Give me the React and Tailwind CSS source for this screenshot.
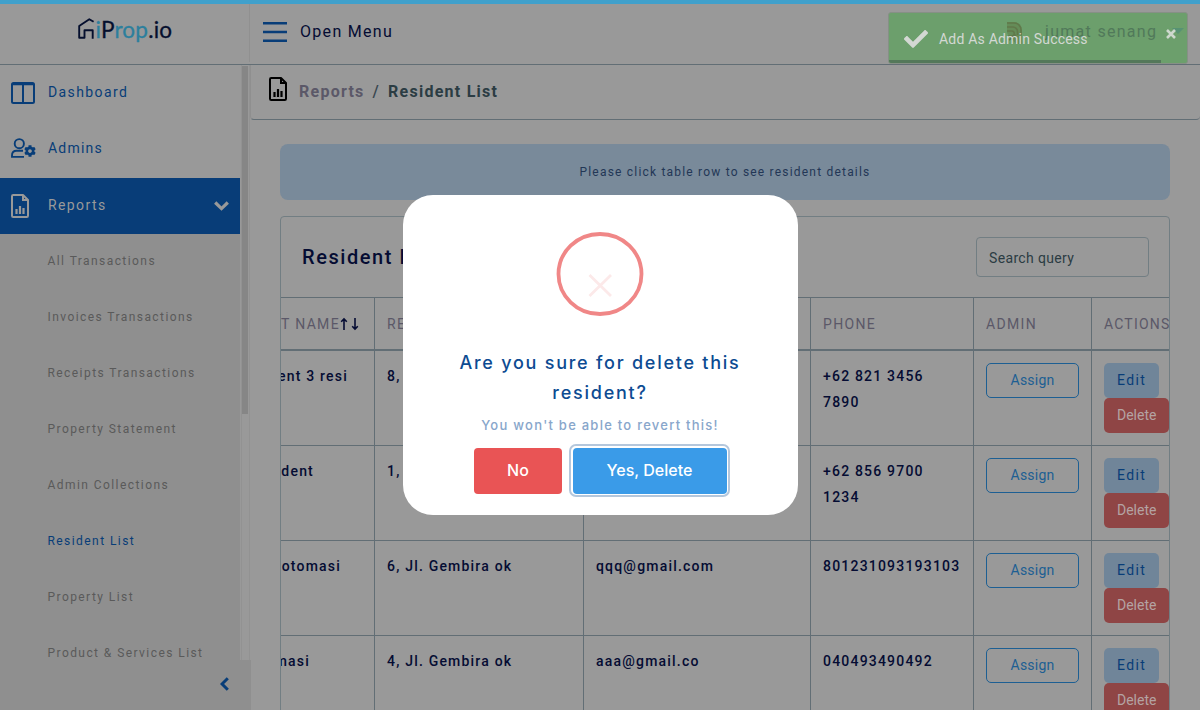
import React from "react";
import { FaCog, FaCheck } from "react-icons/fa";

const subItems = [
  "All Transactions",
  "Invoices Transactions",
  "Receipts Transactions",
  "Property Statement",
  "Admin Collections",
  "Resident List",
  "Property List",
  "Product & Services List",
];

const rows = [
  { name: "ent 3 resi", address: "8,", email: "", phone: "+62 821 3456 7890", nameEnd: 67 },
  { name: "dent", address: "1,", email: "", phone: "+62 856 9700 1234", nameEnd: 33 },
  { name: "otomasi", address: "6, Jl. Gembira ok", email: "qqq@gmail.com", phone: "801231093193103", nameEnd: 60 },
  { name: "masi", address: "4, Jl. Gembira ok", email: "aaa@gmail.co", phone: "040493490492", nameEnd: 29 },
];

function ReportIcon({ className }) {
  return (
    <svg viewBox="0 0 18 24" className={className} fill="none" stroke="currentColor" strokeWidth="2">
      <path d="M1 2.2Q1 1 2.2 1H12l5 5v15.800Q17 23 15.800 23H2.200Q1 23 1 21.800Z" strokeLinejoin="round" />
      <path d="M12 1.500V6H16.500" strokeWidth="2" />
      <path d="M5.500 20v-5M9 20v-8M12.500 20v-6" strokeWidth="2.200" />
    </svg>
  );
}

function Logo() {
  return (
    <svg viewBox="0 0 96 30" className="h-[30px] w-[96px]">
      <path
        d="M16.600 6.800L12.300 4.200 2.200 11V22.800H7.500V15.200H15.700V23.700"
        fill="none"
        stroke="#050f2e"
        strokeWidth="1.900"
        strokeLinejoin="round"
      />
      <text x="18.500" y="23" fontFamily="Lato, sans-serif" fontSize="22.500" fill="#2c7f9d" stroke="#2c7f9d" strokeWidth="0.300" textLength="76.500">
        <tspan>i</tspan>
        <tspan fill="#050f2e" stroke="#050f2e">P</tspan>
        <tspan>rop</tspan>
        <tspan fill="#050f2e" stroke="#050f2e">.io</tspan>
      </text>
    </svg>
  );
}

function Sidebar() {
  return (
    <aside className="flex h-[646px] w-[250px] shrink-0 flex-col">
      <div className="flex h-[595px] overflow-hidden">
        <nav className="w-[240px] text-[14px] tracking-[1.400px] text-[#083d78]">
          <div className="flex h-[56px] items-center pl-[11px]">
            <svg viewBox="0 0 24 22" className="h-[22px] w-[24px]" fill="none" stroke="currentColor" strokeWidth="2">
              <rect x="1" y="1" width="22" height="20" rx="1.500" />
              <path d="M1 2.200H23M12 2v19" />
            </svg>
            <span className="ml-[13px] pb-[2px]">Dashboard</span>
          </div>
          <div className="flex h-[57px] items-center pb-[3px] pl-[11px]">
            <div className="relative h-[20px] w-[25px]">
              <svg viewBox="0 0 25 20" className="h-[20px] w-[25px]" fill="none" stroke="currentColor" strokeWidth="1.900">
                <circle cx="8.300" cy="5.700" r="4.600" />
                <path d="M13 18.900H1V17.500Q1 12.800 5.500 12.800H12" />
              </svg>
              <FaCog className="absolute left-[13px] top-[7px] size-[12px]" />
            </div>
            <span className="ml-[12px] tracking-[1.200px]">Admins</span>
          </div>
          <div className="flex h-[56px] items-center bg-[#083d78] pl-[11px] pr-[11px] text-[#999]">
            <ReportIcon className="h-[24px] w-[18px]" />
            <span className="ml-[19px] flex-1 pb-[2px]">Reports</span>
            <svg viewBox="0 0 15 10" className="h-[10px] w-[15px]" fill="none" stroke="currentColor" strokeWidth="3.200">
              <path d="M1.200 1.500L7.500 7.600L13.800 1.500" />
            </svg>
          </div>
          <ul className="bg-[#8f8f8f] text-[12px] tracking-[1.430px] text-[#5a5a5a]">
            {subItems.map((s) => (
              <li
                key={s}
                className={
                  s === "Resident List"
                    ? "flex h-[56px] items-center pb-[2px] pl-[47.500px] text-[#083d78]"
                    : "flex h-[56px] items-center pb-[2px] pl-[47.500px]"
                }
              >
                {s}
              </li>
            ))}
          </ul>
        </nav>
        <div className="flex w-[10px] border-r border-[#929292] bg-[#999] pl-[1px]">
          <div className="flex-1 border-l border-[#929292] pt-px">
            <div className="h-[348px] w-[6px] bg-[#868686]" />
          </div>
        </div>
      </div>
      <div className="flex h-[51px] w-[251px] items-center justify-end bg-[#8f8f8f] pb-[3px] pr-[22px]">
        <svg viewBox="0 0 9 14" className="h-[14px] w-[9px]" fill="none" stroke="#083d78" strokeWidth="3">
          <path d="M7.800 1.200L2 7l5.800 5.800" />
        </svg>
      </div>
    </aside>
  );
}

function ResidentTable() {
  const head = "flex items-center border-r border-[#626e75] pl-[12px] pt-[2px]";
  const cell = "border-r border-[#626e75] px-[12px] pt-[12px]";
  const cols = "grid w-[888px] grid-cols-[94px_209px_227px_163px_118px_77px]";
  return (
    <div className="w-[888px] overflow-hidden text-[14px]">
      <div className={cols + " h-[54px] border-b-2 border-t border-[#626e75] tracking-[1.350px] text-[#5b5868]"}>
        <div className="flex items-center justify-end border-r border-[#626e75] pr-[14px]">
          <span className="whitespace-nowrap pt-[2px]">T NAME</span>
          <svg viewBox="0 0 20 14" className="h-[14px] w-[20px] shrink-0" fill="none" stroke="#050c33" strokeWidth="1.600">
            <path d="M4 13V2M1.200 4.800L4 2L6.800 4.800M15 1V12M12.200 9.200L15 12L17.800 9.200" />
          </svg>
        </div>
        <div className={head}>RE</div>
        <div className={head}></div>
        <div className={head}>PHONE</div>
        <div className={head}>ADMIN</div>
        <div className="flex items-center pl-[12px] pt-[2px] tracking-[1.200px]">ACTIONS</div>
      </div>
      {rows.map((r) => (
        <div
          key={r.name}
          className={cols + " h-[95px] border-b border-[#626e75] font-medium leading-[26px] tracking-[1.2px] text-[#050c33]"}
        >
          <div className="overflow-hidden border-r border-[#626e75] pt-[12px]">
            <div className="flex justify-end whitespace-nowrap" style={{ width: r.nameEnd }}>
              {r.name}
            </div>
          </div>
          <div className={cell}>{r.address}</div>
          <div className={cell}>{r.email}</div>
          <div className={cell}>{r.phone}</div>
          <div className={cell}>
            <div className="flex h-[35px] items-center justify-center rounded-[5px] border border-[#1d5f93] pb-[1px] font-normal tracking-[0.2px] text-[#1d5f93]">
              Assign
            </div>
          </div>
          <div className="pl-[12px] pt-[12px]">
            <div className="flex h-[35px] w-[55px] items-center rounded-[5px] bg-[#708599] pb-[1px] pl-[13px] font-normal tracking-[1.4px] text-[#083d78]">
              Edit
            </div>
            <div className="flex h-[35px] w-[65px] items-center rounded-[5px] bg-[#8f4545] pb-[1px] pl-[13px] font-normal tracking-normal text-[#b4a3a3]">
              Delete
            </div>
          </div>
        </div>
      ))}
    </div>
  );
}

function Toast() {
  return (
    <div className="absolute left-[888px] top-[12px] h-[52px] w-[300px] overflow-hidden rounded-[3px] border border-[#869086] bg-[#6c9f6c]">
      <svg viewBox="0 0 17 24" className="absolute left-[117px] top-[8px] h-[24px] w-[17px]" fill="none">
        <path d="M1 1H8A8 8 0 0 1 16 9V23H10L1 12Z" fill="#658c58" />
        <path
          d="M1 2H8A7 7 0 0 1 15 9V14M1 6H7A4.500 4.500 0 0 1 11.500 10.500V14M1 10H5.500A2.500 2.500 0 0 1 6 15H2M3 19L10 14"
          stroke="#60784a"
          strokeWidth="1.600"
        />
      </svg>
      <div className="absolute left-[156px] top-[7px] whitespace-nowrap text-[16px] leading-[24px] tracking-[1.300px] text-[#51795a]">jumat senang</div>
      <svg viewBox="0 0 12 6" className="absolute left-[283px] top-[15px] h-[6px] w-[12px]">
        <path d="M0 0H12L6 6Z" fill="#579273" />
      </svg>
      <div className="flex h-full items-center pl-[15px] pt-[2px] text-[#d3d8d3]">
        <FaCheck className="size-[24px]" />
        <span className="relative ml-[11px] text-[14px] tracking-[0.2px]">Add As Admin Success</span>
      </div>
      <svg viewBox="0 0 10 10" className="absolute right-[11px] top-[16px] size-[10px]" fill="none" stroke="#cdd8cd" strokeWidth="2.600">
        <path d="M1 1L9 9M9 1L1 9" />
      </svg>
      <div className="absolute bottom-[-1px] left-0 h-[4px] w-[272px] bg-[#54785a]" />
    </div>
  );
}

function ConfirmDialog() {
  return (
    <div className="absolute left-[402.500px] top-[195px] flex h-[320px] w-[395px] flex-col items-center rounded-[30px] bg-white font-['Inter',sans-serif]">
      <svg viewBox="0 0 88 86" className="mt-[36px] h-[86px] w-[88px]" fill="none">
        <ellipse cx="44" cy="43" rx="41.500" ry="40" stroke="#f08787" strokeWidth="3.800" />
        <path d="M33.500 44L55 65M55 44L33.500 65" stroke="#fce9e9" strokeWidth="2.800" />
      </svg>
      <h2 className="mt-[31px] w-[330px] text-center text-[18px] font-medium leading-[30px] tracking-[1.750px] text-[#0d4b92]">
        Are you sure for delete this resident?
      </h2>
      <p className="mt-[7px] text-[13px] font-medium leading-[20px] tracking-[1.250px] text-[#88a6cb]">You won't be able to revert this!</p>
      <div className="mt-[9px] flex gap-[7px] pl-[4px] text-[16px] font-medium text-white">
        <div className="mt-[4px] flex h-[46px] w-[88px] items-center justify-center rounded-[4px] bg-[#e95455] pb-[2px]">No</div>
        <div className="flex h-[53px] w-[161px] rounded-[7px] border-2 border-[#b4c7dc] p-[1.500px]">
          <div className="flex flex-1 items-center justify-center rounded-[4px] bg-[#3a9be8] pb-[1px]">Yes, Delete</div>
        </div>
      </div>
    </div>
  );
}

export default function App() {
  return (
    <div className="relative h-[710px] w-[1200px] overflow-hidden bg-[#999] font-['Roboto',sans-serif]">
      <div className="h-[4px] bg-[#40a0cb]" />
      <header className="flex h-[61px] border-b border-[#626e75]">
        <div className="mb-[2px] flex w-[250px] border-r border-[#909090] pl-[77px] pt-[11px]">
          <Logo />
        </div>
        <div className="flex items-center pb-[5px] pl-[13px] text-[16px] tracking-[1.300px] text-[#050c33]">
          <svg viewBox="0 0 24 20" className="mt-[1px] h-[20px] w-[24px]" fill="#083d78">
            <path d="M0 0H24V2.500H0ZM0 8.700H24V11.200H0ZM0 17.400H24V19.900H0Z" />
          </svg>
          <span className="ml-[13px]">Open Menu</span>
        </div>
      </header>
      <div className="flex">
        <Sidebar />
        <main className="flex min-w-0 flex-1 flex-col">
          <div className="flex h-[55px] items-center rounded-b-[4px] border-b border-l border-[#626e75] border-l-[#8f8f8f] pl-[18px] text-[16px] font-bold tracking-[1.250px]">
            <ReportIcon className="mb-[6px] h-[24px] w-[18px] text-black" />
            <span className="ml-[12px] text-[#5b5868]">Reports</span>
            <span className="mx-[8px] font-medium text-[#38464f]">/</span>
            <span className="text-[#2b3c43]">Resident List</span>
          </div>
          <div className="ml-[30px] mt-[24px] flex h-[56px] w-[890px] items-center justify-center rounded-[8px] bg-[#798a9a] text-[12px] tracking-[1.2px] text-[#233756]">
            Please click table row to see resident details
          </div>
          <section className="ml-[30px] mt-[16px] h-[600px] w-[890px] rounded-[4px] border border-[#727e83]">
            <div className="flex h-[80px] items-center justify-between pl-[21px] pr-[20px]">
              <h1 className="text-[20px] font-medium tracking-[1.550px] text-[#050c33]">Resident List</h1>
              <div className="flex h-[40px] w-[173px] items-center rounded-[4px] border border-[#727e83] pl-[12px] pt-[2px] text-[14px] tracking-[0.350px] text-[#2b3c43]">
                Search query
              </div>
            </div>
            <ResidentTable />
          </section>
        </main>
      </div>
      <Toast />
      <ConfirmDialog />
    </div>
  );
}
